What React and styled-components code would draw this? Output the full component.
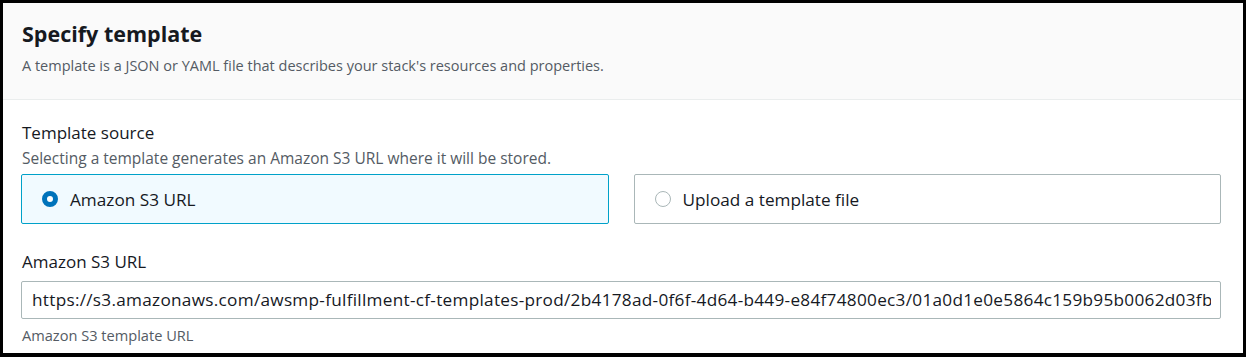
import React from 'react'
import styled, { createGlobalStyle } from 'styled-components';

const ink = "#16191f";
const grey = "#545b64";
const blue = "#0073bb";

const Global = createGlobalStyle`
  html, body { margin: 0; padding: 0; background: #fff; }
  * { box-sizing: border-box; }
`

const Frame = styled.div`
  width: 1246px;
  height: 357px;
  border: 3px solid #000;
  border-bottom-width: 4px;
  background: #fff;
  font-family: "Open Sans", "Noto Sans", sans-serif;
  color: ${ink};
  overflow: hidden;
`
const Header = styled.div`
  height: 97px;
  background: #fafafa;
  border-bottom: 1px solid #eaeded;
  padding: 16px 20px 0 19px;
`
const Title = styled.h2`
  margin: 0;
  font-size: 21.5px;
  line-height: 30px;
  font-weight: 700;
`
const Description = styled.div`
  margin-top: 7px;
  font-size: 14.5px;
  line-height: 20px;
  color: ${grey};
`
const Body = styled.div`
  padding: 22px 22px 0 18px;
`
const Field = styled.div`
  margin-bottom: ${p => p.$gap || 0}px;
`
const Label = styled.div`
  padding-left: 1px;
  font-size: 17px;
  line-height: 22px;
  color: ${ink};
`
const Hint = styled.div`
  margin-top: ${p => p.$top || 0}px;
  padding-left: 1px;
  font-size: ${p => p.$size || 14.6}px;
  line-height: 20px;
  color: ${grey};
`
const Tiles = styled.div`
  display: grid;
  grid-template-columns: 1fr 1fr;
  gap: 25px;
  margin-top: 6px;
`
const Tile = styled.div`
  height: 50px;
  display: flex;
  align-items: center;
  gap: 12px;
  padding-left: 20px;
  border: 1px solid ${p => p.$selected ? "#00a1c9" : "#aab7b8"};
  border-radius: 2px;
  background: ${p => p.$selected ? "#f1faff" : "#fff"};
  font-size: 17.2px;
`
const Radio = styled.span`
  width: 16px;
  height: 16px;
  border-radius: 50%;
  flex: none;
  border: ${p => p.$checked ? `5px solid ${blue}` : "1px solid #aab7b8"};
  background: #fff;
`
const Input = styled.div`
  margin-top: 8px;
  height: 38px;
  display: flex;
  align-items: center;
  padding: 0 9px 1px 10px;
  border: 1px solid #aab7b8;
  border-radius: 2px;
  font-size: 17.2px;
  letter-spacing: 0.28px;
  color: ${ink};
`
const Value = styled.span`
  flex: 1;
  min-width: 0;
  white-space: nowrap;
  overflow: hidden;
`

const App = () => {
  return (
    <Frame>
      <Global />
      <Header>
        <Title>Specify template</Title>
        <Description>A template is a JSON or YAML file that describes your stack's resources and properties.</Description>
      </Header>
      <Body>
        <Field $gap={27}>
          <Label>Template source</Label>
          <Hint $top={4} $size={15.5}>Selecting a template generates an Amazon S3 URL where it will be stored.</Hint>
          <Tiles>
            <Tile $selected>
              <Radio $checked />
              Amazon S3 URL
            </Tile>
            <Tile>
              <Radio />
              Upload a template file
            </Tile>
          </Tiles>
        </Field>
        <Field>
          <Label>Amazon S3 URL</Label>
          <Input>
            <Value>https://s3.amazonaws.com/awsmp-fulfillment-cf-templates-prod/2b4178ad-0f6f-4d64-b449-e84f74800ec3/01a0d1e0e5864c159b95b0062d03fbe0.template</Value>
          </Input>
          <Hint $top={6}>Amazon S3 template URL</Hint>
        </Field>
      </Body>
    </Frame>
  )
}

export default App
